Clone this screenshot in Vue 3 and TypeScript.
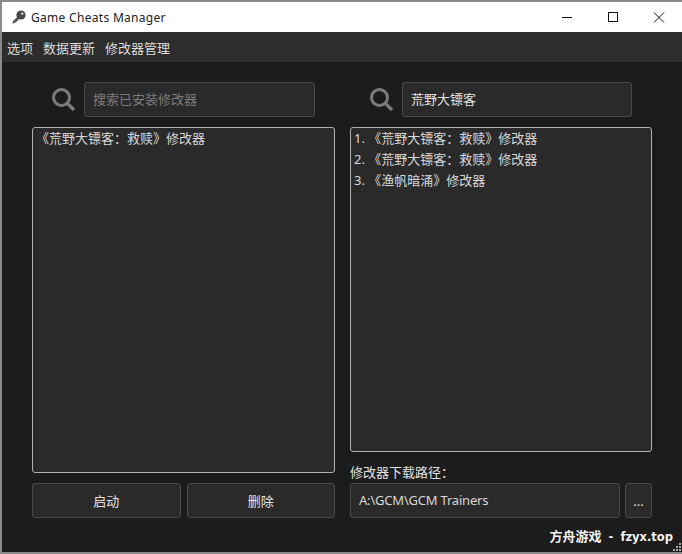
<script setup lang="ts">
const colon = '\uFF1A'
const redemption = `《荒野大镖客${colon}救赎》修改器`
const installed = [redemption]
const results = [`1. ${redemption}`, `2. ${redemption}`, '3. 《渔帆暗涌》修改器']
const menus = ['选项', '数据更新', '修改器管理']
</script>

<template>
  <div class="window">
    <header class="titlebar">
      <svg class="app-icon" width="16" height="16" viewBox="0 0 16 16">
        <path d="M1.5 14.5 L2 12 L7 7.2 L9 9.2 L4.2 14 L3.2 13.6 L2.8 14.6 Z" fill="#555" />
        <circle cx="10" cy="6" r="4.6" fill="#4a4a4a" />
        <circle cx="11.2" cy="4.6" r="1.2" fill="#ddd" />
      </svg>
      <span class="title">Game Cheats Manager</span>
      <div class="controls">
        <svg width="46" height="30" viewBox="0 0 46 30"><path d="M18 15.5h10" stroke="#111" fill="none" /></svg>
        <svg width="46" height="30" viewBox="0 0 46 30"><rect x="18.5" y="10.5" width="9" height="9" stroke="#111" fill="none" /></svg>
        <svg width="46" height="30" viewBox="0 0 46 30"><path d="M18 10.5l10 10M28 10.5l-10 10" stroke="#111" fill="none" /></svg>
      </div>
    </header>

    <nav class="menubar">
      <span v-for="m in menus" :key="m" class="menu-item">{{ m }}</span>
    </nav>

    <main class="content">
      <section class="col">
        <div class="search-row">
          <svg class="search-icon" width="24" height="24" viewBox="0 0 24 24">
            <circle cx="9.5" cy="9.5" r="8" stroke="#7b7b7b" stroke-width="3" fill="none" />
            <path d="M15.5 15.5l6.5 6.5" stroke="#7b7b7b" stroke-width="3.4" fill="none" />
          </svg>
          <div class="field placeholder">搜索已安装修改器</div>
        </div>
        <ul class="list">
          <li v-for="t in installed" :key="t">{{ t }}</li>
        </ul>
        <div class="actions">
          <button class="btn" type="button">启动</button>
          <button class="btn" type="button">删除</button>
        </div>
      </section>

      <section class="col">
        <div class="search-row">
          <svg class="search-icon" width="24" height="24" viewBox="0 0 24 24">
            <circle cx="9.5" cy="9.5" r="8" stroke="#7b7b7b" stroke-width="3" fill="none" />
            <path d="M15.5 15.5l6.5 6.5" stroke="#7b7b7b" stroke-width="3.4" fill="none" />
          </svg>
          <div class="field">荒野大镖客</div>
        </div>
        <ul class="list">
          <li v-for="(t, i) in results" :key="i">{{ t }}</li>
        </ul>
        <label class="path-label">修改器下载路径{{ colon }}</label>
        <div class="path-row">
          <div class="field path">A:\GCM\GCM Trainers</div>
          <button class="btn more" type="button">...</button>
        </div>
      </section>
    </main>

    <div class="watermark"><span class="wm-cn">方舟游戏</span> - fzyx.top</div>
    <svg class="grip" width="10" height="10" viewBox="0 0 10 10">
      <g fill="#aaa">
        <rect x="7" y="1" width="2" height="2" />
        <rect x="4" y="4" width="2" height="2" />
        <rect x="7" y="4" width="2" height="2" />
        <rect x="1" y="7" width="2" height="2" />
        <rect x="4" y="7" width="2" height="2" />
        <rect x="7" y="7" width="2" height="2" />
      </g>
    </svg>
  </div>
</template>

<style>
html, body {
  margin: 0;
  background: #8a8a8a;
}
</style>

<style scoped>
.window {
  position: relative;
  box-sizing: border-box;
  width: 680px;
  height: 550px;
  margin: 2px 0 0 2px;
  background: #1c1c1c;
  color: #e2e2e2;
  font-family: "Noto Sans", "Noto Sans CJK SC", sans-serif;
  font-size: 13px;
  overflow: hidden;
}

.titlebar {
  display: flex;
  align-items: center;
  height: 30px;
  background: #fff;
  color: #222;
}

.app-icon {
  margin-left: 9px;
  margin-right: 4px;
}

.title {
  font-size: 12px;
  letter-spacing: 0.3px;
}

.controls {
  display: flex;
  margin-left: auto;
}

.menubar {
  display: flex;
  align-items: center;
  gap: 10px;
  height: 30px;
  padding-left: 5px;
  background: #2d2d2d;
  color: #dcdcdc;
}

.content {
  display: grid;
  grid-template-columns: 303px 302px;
  column-gap: 15px;
  padding: 20px 0 0 30px;
}

.col {
  display: flex;
  flex-direction: column;
  height: 436px;
}

.search-row {
  display: flex;
  align-items: center;
  gap: 8px;
  padding: 0 20px;
  margin-bottom: 10px;
}

.search-icon {
  flex: none;
}

.field {
  flex: 1;
  box-sizing: border-box;
  height: 35px;
  line-height: 33px;
  padding: 0 8px;
  border: 1px solid #4a4a4a;
  border-radius: 3px;
  background: #2a2a2a;
}

.placeholder {
  color: #7c7c7c;
}

.list {
  flex: 1;
  margin: 0;
  padding: 0 3px;
  list-style: none;
  border: 1px solid #b0b0b0;
  border-radius: 3px;
  background: #2a2a2a;
  color: #d8d8d8;
}

.list li {
  height: 21px;
  line-height: 21px;
}

.actions {
  display: flex;
  gap: 6px;
  margin-top: 10px;
}

.btn {
  flex: 1;
  box-sizing: border-box;
  height: 35px;
  padding: 0;
  border: 1px solid #4a4a4a;
  border-radius: 3px;
  background: #2a2a2a;
  color: #e2e2e2;
  font: inherit;
}

.path-label {
  margin-top: 11px;
  margin-bottom: 2px;
  height: 18px;
  line-height: 18px;
}

.path-row {
  display: flex;
  gap: 5px;
}

.path {
  color: #d8d8d8;
  letter-spacing: -0.2px;
}

.more {
  flex: none;
  width: 27px;
}

.watermark {
  position: absolute;
  right: 9px;
  bottom: 7px;
  color: #f2f2f2;
  font-family: "DejaVu Sans", "Noto Sans CJK SC", sans-serif;
  font-size: 11.5px;
  font-weight: 700;
  word-spacing: 3px;
  white-space: nowrap;
}

.wm-cn {
  font-size: 13px;
}

.grip {
  position: absolute;
  right: 0;
  bottom: 0;
}
</style>
